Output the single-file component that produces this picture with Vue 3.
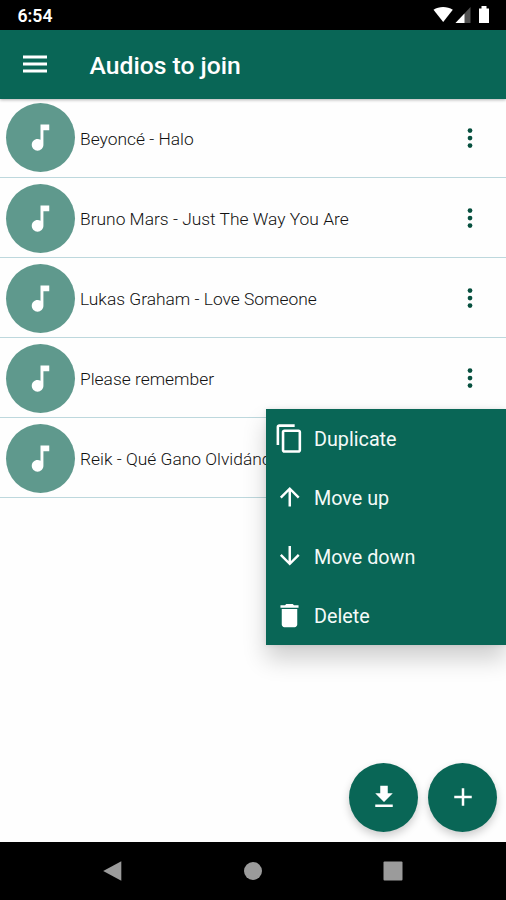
<script setup>
const audios = [
  'Beyoncé - Halo',
  'Bruno Mars - Just The Way You Are',
  'Lukas Graham - Love Someone',
  'Please remember',
  'Reik - Qué Gano Olvidándote',
]
const actions = [
  { label: 'Duplicate', cls: 'lg', path: 'M16 1H4c-1.1 0-2 .9-2 2v14h2V3h12V1zm3 4H8c-1.1 0-2 .9-2 2v14c0 1.1.9 2 2 2h11c1.1 0 2-.9 2-2V7c0-1.1-.9-2-2-2zm0 16H8V7h11v14z' },
  { label: 'Move up', cls: '', path: 'M4 12l1.41 1.41L11 7.83V20h2V7.83l5.58 5.59L20 12l-8-8-8 8z' },
  { label: 'Move down', cls: '', path: 'M20 12l-1.41-1.41L13 16.17V4h-2v12.17l-5.58-5.59L4 12l8 8 8-8z' },
  { label: 'Delete', cls: 'lg', path: 'M6 19c0 1.1.9 2 2 2h8c1.1 0 2-.9 2-2V7H6v12zM19 4h-3.5l-1-1h-5l-1 1H5v2h14V4z' },
]
</script>

<template>
  <div class="screen">
    <div class="status">
      <span class="time">6:54</span>
      <svg class="status-icons" width="60" height="20" viewBox="0 0 60 20">
        <path d="M2.5 4.700C8 1.100 16.200 1.100 21.800 4.700L12.200 17z" fill="#fff" />
        <path d="M39.500 2V18H24.500z" fill="#505050" />
        <path d="M33.500 8.400V18H24.500z" fill="#fff" />
        <path d="M48 3.500h2.500V1h5v2.500H58V18H48z" fill="#fff" />
      </svg>
    </div>
    <header class="bar">
      <svg class="burger" viewBox="0 0 24 18"><path d="M0 .6h24v2.800H0zM0 7.600h24v2.800H0zM0 14.600h24v2.800H0z" /></svg>
      <h1>Audios to join</h1>
    </header>
    <main class="content">
      <ul class="list">
        <li v-for="a in audios" :key="a" class="row">
          <div class="disc">
            <svg viewBox="0 0 24 24"><path d="M12 3v10.550c-.59-.34-1.270-.55-2-.55-2.210 0-4 1.790-4 4s1.790 4 4 4 4-1.790 4-4V7h4V3h-6z" /></svg>
          </div>
          <span class="name">{{ a }}</span>
          <svg class="more" viewBox="0 0 24 24">
            <circle cx="12" cy="6" r="1.900" /><circle cx="12" cy="12" r="1.900" /><circle cx="12" cy="18" r="1.900" />
          </svg>
        </li>
      </ul>
      <div class="fabs">
        <button class="fab"><svg viewBox="0 0 24 24"><path d="M19 9h-4V3H9v6H5l7 7 7-7zM5 18v2h14v-2H5z" /></svg></button>
        <button class="fab"><svg viewBox="0 0 24 24"><path d="M19 13h-6v6h-2v-6H5v-2h6V5h2v6h6v2z" /></svg></button>
      </div>
    </main>
    <nav class="nav">
      <svg viewBox="0 0 22 22"><path d="M20.300 1.300V20.700L2.200 11z" /></svg>
      <svg viewBox="0 0 22 22"><circle cx="11" cy="11" r="9" /></svg>
      <svg viewBox="0 0 22 22"><rect x="1.500" y="1.500" width="19" height="19" rx="1" /></svg>
    </nav>
    <div class="menu">
      <div v-for="m in actions" :key="m.label" class="item">
        <span class="ico"><svg :class="m.cls" viewBox="0 0 24 24"><path :d="m.path" /></svg></span>
        <span class="label">{{ m.label }}</span>
      </div>
    </div>
  </div>
</template>

<style>
body { margin: 0; background: #fff; }
</style>

<style scoped>
.screen {
  position: relative;
  width: 506px;
  height: 900px;
  display: flex;
  flex-direction: column;
  overflow: hidden;
  background: #fefefe;
  font-family: Roboto, sans-serif;
}
.status {
  height: 29.500px;
  flex: none;
  box-sizing: border-box;
  background: #000;
  color: #fff;
  display: flex;
  justify-content: space-between;
  align-items: flex-start;
  padding: 5px 15px 0 17.500px;
}
.time { font-size: 17.600px; line-height: 22px; font-weight: 600; }
.status-icons { width: 60px; height: 20px; }
.bar {
  height: 69px;
  flex: none;
  background: #096656;
  display: flex;
  align-items: center;
  padding-left: 23px;
  box-shadow: 0 1px 3px rgba(0, 0, 0, 0.3);
  z-index: 1;
}
.burger { width: 24px; height: 18px; fill: #fff; }
h1 {
  margin: 3px 0 0 42.500px;
  color: #fff;
  font-size: 24.700px;
  line-height: 30px;
  font-weight: 500;
}
.content {
  flex: 1;
  display: flex;
  flex-direction: column;
  justify-content: space-between;
}
.list { list-style: none; margin: -1.100px 0 0; padding: 0; }
.row {
  height: 80.100px;
  box-sizing: border-box;
  border-bottom: 1px solid #bdd8dd;
  display: flex;
  align-items: center;
  padding: 2px 21px 0 5.500px;
}
.disc {
  width: 69px;
  height: 69px;
  flex: none;
  border-radius: 50%;
  background: #5f998d;
  display: flex;
  align-items: center;
  justify-content: center;
}
.disc svg { width: 35px; height: 35px; fill: #fff; }
.name {
  flex: 1;
  margin-left: 5.500px;
  padding-top: 1.800px;
  font-size: 17.400px;
  line-height: 22px;
  font-weight: 350;
  color: #111;
  white-space: nowrap;
}
.more { width: 30px; height: 30px; fill: #07503f; }
.fabs {
  display: flex;
  justify-content: flex-end;
  gap: 10px;
  padding: 0 9px 10.500px 0;
}
.fab {
  width: 69px;
  height: 69px;
  padding: 0;
  border: 0;
  border-radius: 50%;
  background: #096656;
  display: flex;
  align-items: center;
  justify-content: center;
  box-shadow: 0 4px 8px rgba(0, 0, 0, 0.2);
}
.fab svg { width: 30px; height: 30px; fill: #fff; }
.nav {
  height: 58px;
  flex: none;
  background: #000;
  display: flex;
  justify-content: space-between;
  align-items: center;
  padding: 0 102px 0 101px;
  box-sizing: border-box;
  z-index: 1;
}
.nav svg { width: 22px; height: 22px; fill: #9b9b9b; }
.menu {
  position: absolute;
  left: 266px;
  top: 409.400px;
  width: 240px;
  background: #096656;
  box-shadow: 0 14px 22px rgba(0, 0, 0, 0.19), 0 0 5px rgba(0, 0, 0, 0.1);
}
.item {
  height: 59px;
  display: flex;
  align-items: center;
  gap: 8.500px;
  padding-left: 7.500px;
  color: #f4faf8;
  font-size: 19.750px;
  line-height: 24px;
}
.label { padding-top: 2.200px; }
.ico { width: 32px; height: 32px; display: flex; justify-content: center; align-items: center; padding-bottom: 1.500px; }
.ico svg { width: 29.500px; height: 29.500px; fill: #fff; }
.ico svg.lg { width: 31px; height: 31px; }
</style>
